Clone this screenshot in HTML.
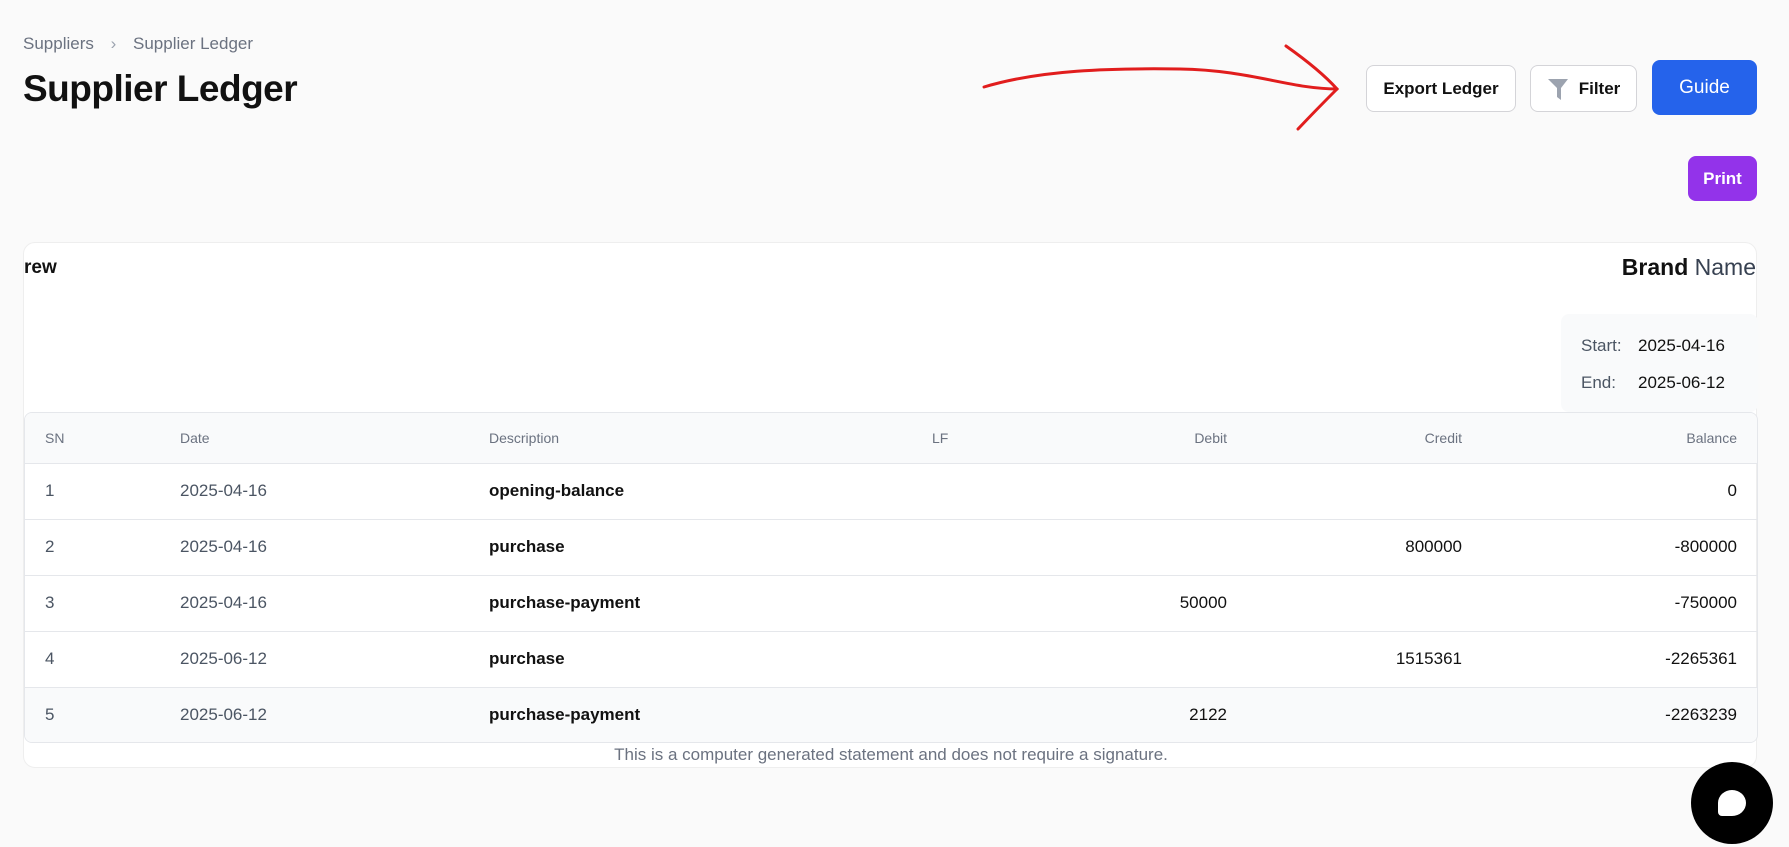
<!DOCTYPE html>
<html><head><meta charset="utf-8"><style>
*{box-sizing:border-box;margin:0;padding:0}
body{width:1789px;height:847px;background:#fafafa;font-family:"Liberation Sans",sans-serif;position:relative;overflow:hidden;color:#111}
.abs{position:absolute}
.bc{left:23px;top:34px;font-size:17px;color:#6b7280}
h1{position:absolute;left:23px;top:68px;font-size:37px;font-weight:700;letter-spacing:-0.5px}
.btn{position:absolute;border-radius:8px;font-size:17px;display:flex;align-items:center;justify-content:center}
.w{background:#fff;border:1px solid #d4d4d8;font-weight:700;color:#111}
.card{left:23px;top:242px;width:1734px;height:526px;background:#fff;border-radius:12px;border:1px solid #eee}
table{width:1732px;border-collapse:collapse;font-size:17px}
.tw{position:absolute;left:0;top:169px;width:1734px;height:331px;border:1px solid #e5e7eb;border-radius:8px;overflow:hidden}
th{height:50px;font-size:14px;font-weight:400;color:#6b7280;background:#f9fafb;text-align:left}
td{height:56px;border-top:1px solid #e5e7eb}
.r{text-align:right}
.g{color:#4b5563}
.b{font-weight:700;color:#111}
</style></head><body>
<div class="abs bc">Suppliers <span style="margin:0 12px;color:#9ca3af">&#8250;</span> Supplier Ledger</div>
<h1>Supplier Ledger</h1>
<svg class="abs" style="left:0;top:0" width="1789" height="847"><path d="M984 87 C1040 70 1110 68 1180 69 C1250 70 1290 89 1337 89" stroke="#e11d1d" stroke-width="3" fill="none" stroke-linecap="round"/><path d="M1286 46 Q1320 70 1337 89 Q1316 110 1298 129" stroke="#e11d1d" stroke-width="3" fill="none" stroke-linecap="round"/></svg>
<div class="btn w" style="left:1366px;top:65px;width:150px;height:47px">Export Ledger</div>
<div class="btn w" style="left:1530px;top:65px;width:107px;height:47px"><svg width="22" height="24" viewBox="0 0 22 24" style="margin-right:10px"><path d="M1 2h20l-7 9v12l-4-3v-9z" fill="#9ca3af"/></svg>Filter</div>
<div class="btn" style="left:1652px;top:60px;width:105px;height:55px;background:#2563eb;color:#fff;font-size:19px">Guide</div>
<div class="btn" style="left:1688px;top:156px;width:69px;height:45px;background:#9333ea;color:#fff;font-weight:700">Print</div>
<div class="abs card">
<div class="abs" style="left:0;top:14px;font-size:19px;font-weight:700">rew</div>
<div class="abs" style="right:0;top:11px;font-size:23px"><b>Brand</b> <span style="color:#374151">Name</span></div>
<div class="abs" style="left:1537px;top:71px;width:197px;height:98px;background:#f9fafb;border-radius:8px;font-size:17px">
<div class="abs" style="left:20px;top:22px"><span class="g">Start:</span><span style="position:absolute;left:57px;white-space:nowrap">2025-04-16</span></div>
<div class="abs" style="left:20px;top:59px"><span class="g">End:</span><span style="position:absolute;left:57px;white-space:nowrap">2025-06-12</span></div>
</div>
<div class="tw"><table>
<colgroup><col style="width:155px"><col style="width:309px"><col style="width:443px"><col style="width:100px"><col style="width:195px"><col style="width:235px"><col></colgroup>
<tr><th style="padding-left:20px">SN</th><th>Date</th><th>Description</th><th>LF</th><th class="r">Debit</th><th class="r">Credit</th><th class="r" style="padding-right:20px">Balance</th></tr>
<tr><td class="g" style="padding-left:20px">1</td><td class="g">2025-04-16</td><td class="b">opening-balance</td><td></td><td></td><td></td><td class="r" style="padding-right:20px">0</td></tr>
<tr><td class="g" style="padding-left:20px">2</td><td class="g">2025-04-16</td><td class="b">purchase</td><td></td><td></td><td class="r">800000</td><td class="r" style="padding-right:20px">-800000</td></tr>
<tr><td class="g" style="padding-left:20px">3</td><td class="g">2025-04-16</td><td class="b">purchase-payment</td><td></td><td class="r">50000</td><td></td><td class="r" style="padding-right:20px">-750000</td></tr>
<tr><td class="g" style="padding-left:20px">4</td><td class="g">2025-06-12</td><td class="b">purchase</td><td></td><td></td><td class="r">1515361</td><td class="r" style="padding-right:20px">-2265361</td></tr>
<tr style="background:#f9fafb"><td class="g" style="padding-left:20px">5</td><td class="g">2025-06-12</td><td class="b">purchase-payment</td><td></td><td class="r">2122</td><td></td><td class="r" style="padding-right:20px">-2263239</td></tr>
</table></div>
<div class="abs" style="left:0;width:1734px;top:502px;text-align:center;font-size:17px;color:#6b7280">This is a computer generated statement and does not require a signature.</div>
</div>
<div class="abs" style="left:1691px;top:762px;width:82px;height:82px;border-radius:50%;background:#000"><div class="abs" style="left:27px;top:28px;width:28px;height:26px;background:#fff;border-radius:50% 50% 50% 4px/50% 50% 50% 4px"></div></div>
</body></html>
